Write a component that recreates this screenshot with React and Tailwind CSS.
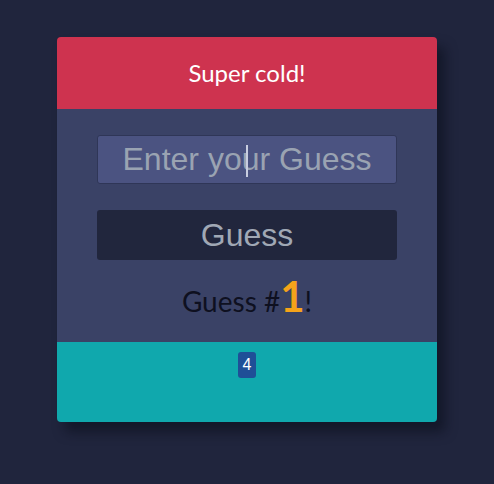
import React from 'react';

const App = () => {
  return (
    <div className="min-h-[484px] w-full bg-[#20253d] pt-[37px] flex justify-center">
      <div className="w-[380px] h-[385px] flex flex-col rounded-[4px] overflow-hidden shadow-[8px_10px_12px_rgba(10,12,25,0.55)]">
        {/* Status */}
        <div className="h-[72px] bg-[#ce334f] flex items-center justify-center">
          <p className="text-white text-[24px] font-['Lato',sans-serif]">Super cold!</p>
        </div>

        {/* Form */}
        <div className="h-[233px] bg-[#3a4266] flex flex-col items-center pt-[26px]">
          <div className="relative">
            <input
              type="text"
              placeholder="Enter your Guess"
              className="w-[300px] h-[49px] bg-[#4b5381] border border-[#2f3657] rounded-[3px] text-center text-[32px] text-[#a2aab8] placeholder-[#9aa3b2] font-['Liberation_Sans',Arial,sans-serif] outline-none"
            />
            <span className="absolute left-[149px] top-[10px] w-[2px] h-[32px] bg-[#c8cde0]" />
          </div>
          <button className="mt-[26px] w-[300px] h-[50px] bg-[#21263d] rounded-[3px] text-[32px] text-[#a0a8b5] font-['Liberation_Sans',Arial,sans-serif]">
            Guess
          </button>
          <p className="mt-[15px] text-[28px] text-[#0e1020] font-['Lato',sans-serif] leading-none">
            Guess #<span className="text-[42px] font-bold text-[#f5a31a]">1</span>!
          </p>
        </div>

        {/* History */}
        <div className="h-[80px] bg-[#10a8ad] flex justify-center pt-[10px]">
          <span className="h-[26px] w-[18px] bg-[#1f4f97] rounded-[3px] text-white text-[16px] flex items-center justify-center font-['Liberation_Sans',Arial,sans-serif]">
            4
          </span>
        </div>
      </div>
    </div>
  );
};

export default App;
